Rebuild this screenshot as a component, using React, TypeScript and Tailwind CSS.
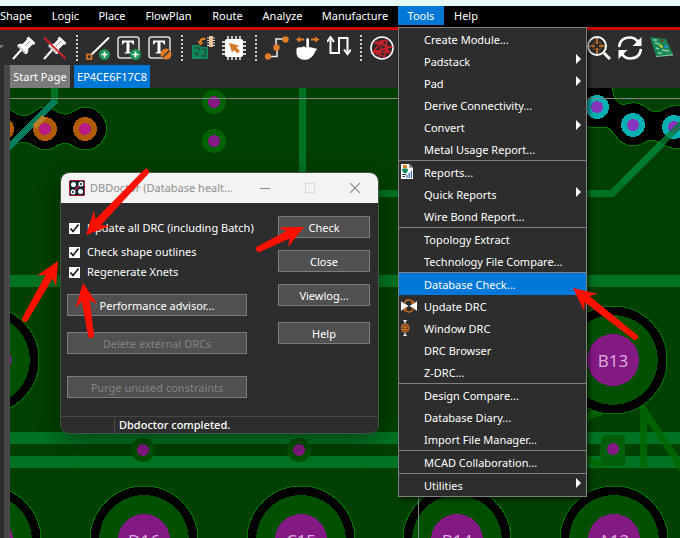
import type { ReactNode } from "react";

type MenuEntry = { label: string; submenu?: boolean; icon?: ReactNode; active?: boolean };

const ORANGE = "#e07b28";

function PinShape() {
  return (
    <>
      <path d="M16.500 0.500 L23.500 7 L21.500 9 L20.500 8.500 L16 13 Q17 16 14.500 18 L13 18 L5.500 10.500 L5.500 9 Q7.500 7 10.500 8 L15 3.500 L14.500 2.500 Z" fill="#fff" />
      <path d="M9.500 13.500 L1 23" stroke="#fff" strokeWidth="2" />
      <path d="M13 10 L18 5 M6.500 10 L13.500 17" stroke="#666" strokeWidth="0.8" />
    </>
  );
}

function PlusBadge() {
  return (
    <>
      <circle cx="18.500" cy="18.500" r="5.500" fill="#1f9255" />
      <path d="M18.500 15.500 V21.500 M15.500 18.500 H21.500" stroke="#fff" strokeWidth="1.6" />
    </>
  );
}

function TextBox() {
  return (
    <>
      <rect x="1" y="1" width="21" height="21" rx="2.500" fill="#333" stroke="#ddd" strokeWidth="1.5" />
      <path d="M5 4.500 H17 V8.500 H16 Q15.500 6 12.500 6 V15.500 Q12.500 16.500 14.500 16.700 V17.500 H7.500 V16.700 Q9.500 16.500 9.500 15.500 V6 Q6.500 6 6 8.500 H5 Z" fill="#fff" />
    </>
  );
}

const toolbar: { name: string; art?: ReactNode }[] = [
  { name: "Pin", art: <PinShape /> },
  {
    name: "Unpin",
    art: (
      <>
        <PinShape />
        <path d="M1 1.500 L22.500 22.500" stroke="#d2222a" strokeWidth="1.8" />
      </>
    ),
  },
  { name: "" },
  {
    name: "Add line",
    art: (
      <>
        <path d="M4 20 L23 1.500" stroke="#fff" strokeWidth="2" />
        <rect x="1" y="18.500" width="4.500" height="4.500" fill="#333" stroke={ORANGE} strokeWidth="1.6" />
        <PlusBadge />
      </>
    ),
  },
  { name: "Add text", art: <><TextBox /><PlusBadge /></> },
  {
    name: "Edit text",
    art: (
      <>
        <TextBox />
        <circle cx="18" cy="18" r="5.500" fill={ORANGE} />
        <path d="M14.500 21.500 L21.500 14.500" stroke="#333" strokeWidth="1.5" />
      </>
    ),
  },
  { name: "" },
  {
    name: "Place part",
    art: (
      <>
        <path d="M1 9 H8 L10 11 H17 V23 H1 Z" fill="#10875a" />
        <path d="M3.500 12 H8 V15 M10.500 13.500 H14.500 V20 H10.500 M3.500 17.500 H6.500 V20.500" fill="none" stroke="#234b38" strokeWidth="1.3" />
        <path d="M14.500 3 Q9.500 2 9.500 6" fill="none" stroke={ORANGE} strokeWidth="2.2" />
        <path d="M6.500 4.500 L12.500 7 L9 9.500 Z" fill={ORANGE} />
        <path d="M16 2 H24 M16 4.500 H24 M16 7 H24 M16 9.500 H24" stroke="#ddd" strokeWidth="1.2" />
        <rect x="18" width="4" height="11" fill="#e6c59b" />
      </>
    ),
  },
  {
    name: "Select chip",
    art: (
      <>
        <path d="M6 0 V24 M10 0 V24 M14 0 V24 M18 0 V24 M0 6 H24 M0 10 H24 M0 14 H24 M0 18 H24" stroke="#fff" strokeWidth="1.4" />
        <rect x="3" y="3" width="18" height="18" rx="2" fill="#fff" />
        <path d="M7 7 L17 9.500 L14.500 11.500 L18 15 L15.500 17.500 L12 14 L10 16.500 Z" fill="#d77a2b" />
      </>
    ),
  },
  { name: "" },
  {
    name: "Connect",
    art: (
      <>
        <path d="M3 20.500 H12 V11.500 M11 11.500 V3 H20" fill="none" stroke="#eee" strokeWidth="1.5" />
        <circle cx="3" cy="20.500" r="3.200" fill={ORANGE} />
        <circle cx="11.500" cy="11.500" r="3.200" fill={ORANGE} />
        <circle cx="20.500" cy="3.500" r="3.200" fill={ORANGE} />
      </>
    ),
  },
  {
    name: "Slide",
    art: (
      <>
        <path d="M10.300 14 V3 Q11.500 1 13 3 V11 L20 12.500 Q22 13 19.500 15 Q16 23.500 9.500 23.800 Q2 24 0.500 18 V12.500 Q2 10.500 5 11.500 Q8 9.500 10.300 12 Z" fill="#fff" />
        <path d="M3 3.500 H8 M15 3.500 H20" stroke={ORANGE} strokeWidth="1.8" />
        <path d="M4 0.500 V6.500 L0 3.500 Z M19 0.500 V6.500 L23.500 3.500 Z" fill={ORANGE} />
      </>
    ),
  },
  {
    name: "Delay tune",
    art: (
      <>
        <path d="M3.500 2 V17 H12 V2 H20.500 V17" fill="none" stroke="#fff" strokeWidth="2" />
        <path d="M0 6 L3.500 1 L7 6 M17 13.500 L20.500 18 L24 13.500" fill="none" stroke="#fff" strokeWidth="2" />
      </>
    ),
  },
  { name: "" },
  {
    name: "Ratsnest",
    art: (
      <>
        <circle cx="12" cy="12" r="11" fill="#292929" stroke="#fff" strokeWidth="1.6" />
        <path d="M3 16 L12 5 L20 18 M12 5 L5 7 L21 11 L3 16 L21 16 M12 5 L9 21 M12 5 L17 4 L15 21 L3 16" fill="none" stroke="#cf2027" strokeWidth="1.5" />
      </>
    ),
  },
];

const rightTools: { name: string; art: ReactNode }[] = [
  {
    name: "Zoom to point",
    art: (
      <>
        <circle cx="10" cy="10" r="9" fill="none" stroke="#fff" strokeWidth="2" />
        <path d="M17 17 L23 23" stroke="#fff" strokeWidth="3" />
        <path d="M10 2 V8 M10 12 V18 M2 10 H8 M12 10 H18" stroke={ORANGE} strokeWidth="1.600" />
        <circle cx="10" cy="10" r="4.500" fill="none" stroke="#a85a20" strokeWidth="0.8" />
      </>
    ),
  },
  {
    name: "Refresh",
    art: (
      <>
        <path d="M1 11 Q2 1.500 12 1.500 Q17 1.500 20 6 M23 13 Q22 22.500 12 22.500 Q7 22.500 4 18" fill="none" stroke="#fff" strokeWidth="2.600" />
        <path d="M23.500 1 V10 H14.500 Z M0.500 23 V14 H9.500 Z" fill="#fff" />
      </>
    ),
  },
  {
    name: "3D view",
    art: (
      <>
        <path d="M1 1 L17 3 L24 18 L7 20 Z" fill="#198653" />
        <path d="M7 20 L24 18 V19.500 L7 21 Z" fill="#7fc69a" />
        <path d="M4 4 H8 M6 7 L10 8 M7 12 L10 13 M13 14 L20 15 M9 17 H13" stroke="#8fd0a8" strokeWidth="1.4" />
        <path d="M10 3 L15 4 V6 L11 5 Z" fill="#6b3a32" />
        <path d="M10 8 L13 9 L14 12 L11 11 Z" fill="#e2c630" />
        <path d="M15 9 L18 9 L19 12 L16 12 Z" fill="#2d8bd0" />
      </>
    ),
  },
];

const ReportIcon = (
  <svg viewBox="0 0 16 16" className="size-4">
    <path d="M0 0 H8 L12 4 V15 H0 Z" fill="#fff" />
    <path d="M8 0 V4 H12 Z" fill="#999" />
    <path d="M2 1 H6 V4 H2 Z" fill={ORANGE} />
    <path d="M1 5 Q4 3.500 7 5 Q7 9 4 9.500 Q1 8 1 5 Z" fill="#158a58" />
    <path d="M1.500 10.500 H5 M1.500 12.500 H4" stroke="#333" />
    <path d="M6 14 V11 M8.200 14 V9 M10.400 14 V7" stroke="#3e75b8" strokeWidth="1.300" />
  </svg>
);
const UpdateIcon = (
  <svg viewBox="0 0 17 16" className="size-4">
    <path d="M0 3 L8 8 L0 13 Z M17 3 L9 8 L17 13 Z" fill="#fff" />
    <path d="M3.500 5 Q5 1 9 1.500 Q12 2 13 4 M13.500 10 Q12 14.500 8 14.500 Q5 14 4 12" fill="none" stroke="#c96d22" strokeWidth="1.600" />
    <path d="M14 1.500 V5.500 H10 Z M3 14.500 V10.500 H7 Z" fill="#c96d22" />
  </svg>
);
const WindowIcon = (
  <svg viewBox="0 0 16 16" className="size-4">
    <path d="M2 0 H6 L4 3 Z M2 16 H6 L4 13 Z" fill="#fff" />
    <path d="M4 0 V16" stroke="#ccc" />
    <circle cx="4" cy="8" r="4" fill="#7b4217" stroke="#c96d22" strokeWidth="1.200" />
    <path d="M2 7 H6 M2 9.500 H6" stroke="#e59a56" />
  </svg>
);

const toolsMenu: MenuEntry[][] = [
  [
    { label: "Create Module..." },
    { label: "Padstack", submenu: true },
    { label: "Pad", submenu: true },
    { label: "Derive Connectivity..." },
    { label: "Convert", submenu: true },
    { label: "Metal Usage Report..." },
  ],
  [{ label: "Reports...", icon: ReportIcon }, { label: "Quick Reports", submenu: true }, { label: "Wire Bond Report..." }],
  [{ label: "Topology Extract" }, { label: "Technology File Compare..." }],
  [
    { label: "Database Check...", active: true },
    { label: "Update DRC", icon: UpdateIcon },
    { label: "Window DRC", icon: WindowIcon },
    { label: "DRC Browser" },
    { label: "Z-DRC..." },
  ],
  [{ label: "Design Compare..." }, { label: "Database Diary..." }, { label: "Import File Manager..." }],
  [{ label: "MCAD Collaboration..." }],
  [{ label: "Utilities", submenu: true }],
];

function ToolsMenu() {
  return (
    <ul role="menu" className="absolute top-[21px] left-0 z-20 w-[189px] divide-y divide-[#808080] border border-[#808080] bg-[#2d2d2d] shadow-[3px_3px_4px_rgba(0,0,0,0.5)]">
      {toolsMenu.map((group, i) => (
        <li key={i} role="none">
          {group.map((entry) => (
            <button
              key={entry.label}
              role="menuitem"
              className={`flex h-[22px] w-full items-center pr-[5px] pl-[2px] text-left ${entry.active ? "bg-[#0078d7]" : ""}`}
            >
              <span className="w-[23px] shrink-0">{entry.icon}</span>
              <span className="grow pt-[3px] whitespace-nowrap">{entry.label}</span>
              {entry.submenu && (
                <svg viewBox="0 0 5 10" className="mb-1 h-[10px] w-[5px]">
                  <path d="M0 0 L5 5 L0 10 Z" fill="#fff" />
                </svg>
              )}
            </button>
          ))}
        </li>
      ))}
    </ul>
  );
}

const menuBar = [
  { label: "Shape", width: "w-[42px] pr-[10px]" },
  { label: "Logic", width: "w-[47px]" },
  { label: "Place", width: "w-[46px]" },
  { label: "FlowPlan", width: "w-[67px]" },
  { label: "Route", width: "w-[51px]" },
  { label: "Analyze", width: "w-[59px]" },
  { label: "Manufacture", width: "w-[86px]" },
  { label: "Tools", width: "w-[46px]" },
  { label: "Help", width: "w-[44px]" },
];

function BallPad({ x, y, label }: { x: number; y: number; label?: string }) {
  return (
    <g>
      <circle cx={x} cy={y} r="54" fill="#000" stroke="#007800" />
      <circle cx={x} cy={y} r="45" fill="#005000" />
      <circle cx={x} cy={y} r="26" fill="#831983" />
      {label && (
        <text x={x} y={y + 7} textAnchor="middle" fontSize="17" fill="#dba9db">
          {label}
        </text>
      )}
    </g>
  );
}

function Via({ x, y, ring, hole }: { x: number; y: number; ring: string; hole: string }) {
  return (
    <g>
      <circle cx={x} cy={y} r="12" fill={ring} />
      <circle cx={x} cy={y} r="6" fill={hole} />
    </g>
  );
}

function Board() {
  return (
    <svg className="absolute inset-0 size-full font-['Noto_Sans',sans-serif]" shapeRendering="crispEdges">
      <g transform="translate(-10 -88)">
        <g stroke="#007322" fill="none">
          <path d="M302.500 88 V190 M378 193.500 H612 L684 122" strokeWidth="7" />
          <path d="M0 281 H4000 M0 438 H4000 M0 462 H4000" strokeWidth="12" />
        </g>
        <path d="M0 108 C14 108 16 116 24 116 C32 116 36 107 45 107 C54 107 57 115 66 114 C73 114 76 107 85 107 A21 21 0 0 1 85 150 C76 150 72 143 65 143 C58 143 54 150 45 150 C35 150 32 142 24 142 C18 142 16 147 0 148 Z" fill="#000" stroke="#007800" />
        <Via x={2} y={129} ring="#b35b00" hole="#b81b83" />
        <Via x={45} y={129} ring="#b35b00" hole="#b81b83" />
        <Via x={85} y={129} ring="#b35b00" hole="#b81b83" />
        <path d="M54.500 88 V104" stroke="#007322" strokeWidth="7" />
        <path d="M55 101 L6 150" stroke="#007d5a" strokeWidth="7" />
        <path d="M44 117 L34 127" stroke="#b8802a" strokeWidth="5" />
        <circle cx="45" cy="129" r="6" fill="#b81b83" />
        <Via x={214} y={102} ring="#006200" hole="#831983" />
        <Via x={214} y={141} ring="#006200" hole="#831983" />
        <path d="M580 80 H612 C612 96 615 102 623 105 C632 101 640 103 646 107 C653 113 657 113 662 110 C668 106 672 105 690 106 V148 H672 C662 146 660 140 650 140 C645 140 643 146 633 146 C615 145 615 128 605 127 C596 129 590 128 580 124 Z" fill="#000" stroke="#007800" />
        <Via x={597} y={107} ring="#00b0b0" hole="#8735bd" />
        <Via x={633} y={125} ring="#00b0b0" hole="#8735bd" />
        <Via x={674} y={127} ring="#00b0b0" hole="#8735bd" />
        <path d="M684 121 L622 183" stroke="#008038" strokeWidth="7" opacity="0.75" />
        <Via x={143} y={450} ring="#005000" hole="#831983" />
        <Via x={299} y={450} ring="#005000" hole="#831983" />
        <g fill="none" stroke="#006a00" strokeWidth="7" opacity="0.8">
          <path d="M643 467 V409 L684 471" />
          <path d="M602 412 Q580 414 580 438 Q580 464 604 464" />
        </g>
        <path d="M604 435 H625 V466 H604 Q595 449 604 435 Z" fill="#005f08" />
        <circle cx="613" cy="449" r="6" fill="#831983" />
        <BallPad x={-15} y={360} />
        <BallPad x={613} y={360} label="B13" />
        <BallPad x={-13} y={540} />
        <BallPad x={144} y={540} label="D16" />
        <BallPad x={301} y={540} label="C15" />
        <BallPad x={457} y={540} label="B14" />
        <BallPad x={614} y={540} label="A13" />
        <path d="M0 98.500 H4000 M418.500 88 V4000" stroke="#858585" />
      </g>
    </svg>
  );
}

function Check({ label }: { label: string }) {
  return (
    <label className="flex h-5 items-center gap-[7px] whitespace-nowrap">
      <span className="grid size-[11px]">
        <input type="checkbox" defaultChecked className="peer col-start-1 row-start-1 size-[11px] appearance-none bg-white" />
        <svg viewBox="0 0 11 11" className="pointer-events-none invisible col-start-1 row-start-1 size-[11px] peer-checked:visible">
          <path d="M1.500 5.500 L4 8.500 L9.500 1.500" fill="none" stroke="#111" strokeWidth="1.500" />
        </svg>
      </span>
      {label}
    </label>
  );
}

function PushButton({ label, disabled }: { label: string; disabled?: boolean }) {
  return (
    <button disabled={disabled} className="h-[22px] w-full border border-[#7d7d7d] bg-[#505050] pt-[2px] leading-[18px] disabled:text-[#838383]">
      {label}
    </button>
  );
}

function DbDoctor() {
  return (
    <section
      aria-label="DBDoctor"
      className="absolute top-[173px] left-[61px] z-10 w-[317px] overflow-hidden rounded-lg bg-[#2d2d2d] shadow-[0_6px_24px_rgba(0,0,0,0.45)] outline outline-[#3c5a3c]"
    >
      <header className="flex h-[30px] items-center bg-[#f3f3f3] pl-2 text-[#909090]">
        <svg viewBox="0 0 16 16" className="mr-[5px] size-4 shrink-0">
          <rect width="16" height="16" rx="1.500" fill="#b01030" />
          <rect x="1" y="1" width="14" height="14" fill="#092735" />
          <path d="M3 13 L13 3" stroke="#d71942" strokeWidth="1.600" />
          <circle cx="4.500" cy="4.500" r="2.500" fill="#fff" />
          <circle cx="11.500" cy="11.500" r="2.500" fill="#fff" />
          <circle cx="12" cy="4" r="1.800" fill="#092735" stroke="#fff" strokeWidth="1.400" />
          <circle cx="4" cy="12" r="1.800" fill="#092735" stroke="#fff" strokeWidth="1.400" />
        </svg>
        <h1 className="grow text-[11px] whitespace-nowrap">DBDoctor (Database healt...</h1>
        <button aria-label="Minimize" className="grid h-full w-[45px] place-items-center">
          <svg viewBox="0 0 10 10" className="size-[10px]"><path d="M0 5.500 H10" stroke="#888" /></svg>
        </button>
        <button aria-label="Maximize" disabled className="grid h-full w-[45px] place-items-center">
          <svg viewBox="0 0 10 10" className="size-[10px]"><rect x="0.500" y="0.500" width="9" height="9" fill="none" stroke="#dcdcdc" /></svg>
        </button>
        <button aria-label="Close window" className="grid h-full w-[46px] place-items-center">
          <svg viewBox="0 0 10 10" className="size-[10px]"><path d="M0 0 L10 10 M10 0 L0 10" stroke="#888" strokeWidth="1.200" /></svg>
        </button>
      </header>
      <div className="flex justify-between pt-[13px] pr-2 pb-[18px] pl-[6px]">
        <div className="w-[180px]">
          <div className="pt-[2px] pl-[2px]">
            <Check label="Update all DRC (including Batch)" />
            <div className="pt-1">
              <Check label="Check shape outlines" />
            </div>
            <Check label="Regenerate Xnets" />
          </div>
          <div className="mt-3 flex flex-col gap-4">
            <PushButton label="Performance advisor..." />
            <PushButton label="Delete external DRCs" disabled />
          </div>
          <div className="mt-[22px]">
            <PushButton label="Purge unused constraints" disabled />
          </div>
        </div>
        <div className="flex w-[92px] flex-col gap-3">
          <PushButton label="Check" />
          <PushButton label="Close" />
          <PushButton label="Viewlog..." />
          <div className="pt-1">
            <PushButton label="Help" />
          </div>
        </div>
      </div>
      <footer className="flex h-[17px] border-t border-[#484848] font-medium">
        <span className="w-[54px] border-r border-[#484848]" />
        <span className="pl-1 leading-4">Dbdoctor completed.</span>
      </footer>
    </section>
  );
}

const arrows = [
  { tip: [86, 235], tail: [146, 172] },
  { tip: [58, 261], tail: [25, 319] },
  { tip: [83, 283], tail: [91, 335] },
  { tip: [304, 227], tail: [259, 249] },
  { tip: [573, 288], tail: [635, 337] },
];

function Arrows() {
  return (
    <svg className="pointer-events-none absolute inset-0 z-30 size-full" fill="#ff1000">
      {arrows.map(({ tip, tail }) => {
        const dx = tail[0] - tip[0];
        const dy = tail[1] - tip[1];
        const len = Math.hypot(dx, dy);
        const angle = (Math.atan2(dy, dx) * 180) / Math.PI;
        return (
          <path
            key={tip.join()}
            transform={`translate(${tip[0]} ${tip[1]}) rotate(${angle})`}
            d={`M0 0 L23 -11 L18 -4 L${len} -3 A3 3 0 0 1 ${len} 3 L18 4 L23 11 Z`}
          />
        );
      })}
    </svg>
  );
}

function ToolButton({ name, art }: { name: string; art: ReactNode }) {
  return (
    <button aria-label={name} className="size-6 shrink-0">
      <svg viewBox="0 0 24 24" className="size-6">{art}</svg>
    </button>
  );
}

export default function App() {
  return (
    <div className="relative flex min-h-screen flex-col overflow-hidden bg-[#2d2d2d] font-['Noto_Sans',sans-serif] text-[11px] text-white">
      <div className="h-[6px] bg-[#e4f8f8]" />
      <nav className="flex h-6 border-b-[3px] border-[#cc0000] bg-black">
        {menuBar.map(({ label, width }) => (
          <div key={label} className="relative">
            <button className={`h-[19px] text-center whitespace-nowrap leading-5 ${width} ${label === "Tools" ? "bg-[#0078d7]" : ""}`}>{label}</button>
            {label === "Tools" && <ToolsMenu />}
          </div>
        ))}
      </nav>
      <div role="toolbar" className="relative flex h-[35px] items-center gap-[7px] pl-3">
        <svg viewBox="0 0 4 4" className="absolute top-[15px] left-0 size-1"><path d="M0 0 H4 L0 4 Z" fill="#777" /></svg>
        {toolbar.map(({ name, art }, i) =>
          art ? (
            <ToolButton key={i} name={name} art={art} />
          ) : (
            <span key={i} className="flex w-[5px] shrink-0 justify-center">
              <span className="h-[26px] border-l-2 border-dotted border-[#cfcfcf]" />
            </span>
          ),
        )}
        <span className="w-[179px] shrink-0" />
        {rightTools.map((tool) => (
          <ToolButton key={tool.name} {...tool} />
        ))}
      </div>
      <div className="flex grow">
        <div className="w-[10px] shrink-0 border-r-[6px] border-[#484848]" />
        <main className="flex grow flex-col">
          <div role="tablist" className="flex h-[23px] gap-1">
            <button role="tab" className="w-[60px] bg-[#7b7b7b] pt-px whitespace-nowrap">Start Page</button>
            <button role="tab" aria-selected="true" className="w-[76px] bg-[#0078d7] pt-px whitespace-nowrap">EP4CE6F17C8</button>
          </div>
          <div className="relative grow overflow-hidden bg-[#004000]">
            <Board />
          </div>
        </main>
      </div>
      <DbDoctor />
      <Arrows />
    </div>
  );
}
